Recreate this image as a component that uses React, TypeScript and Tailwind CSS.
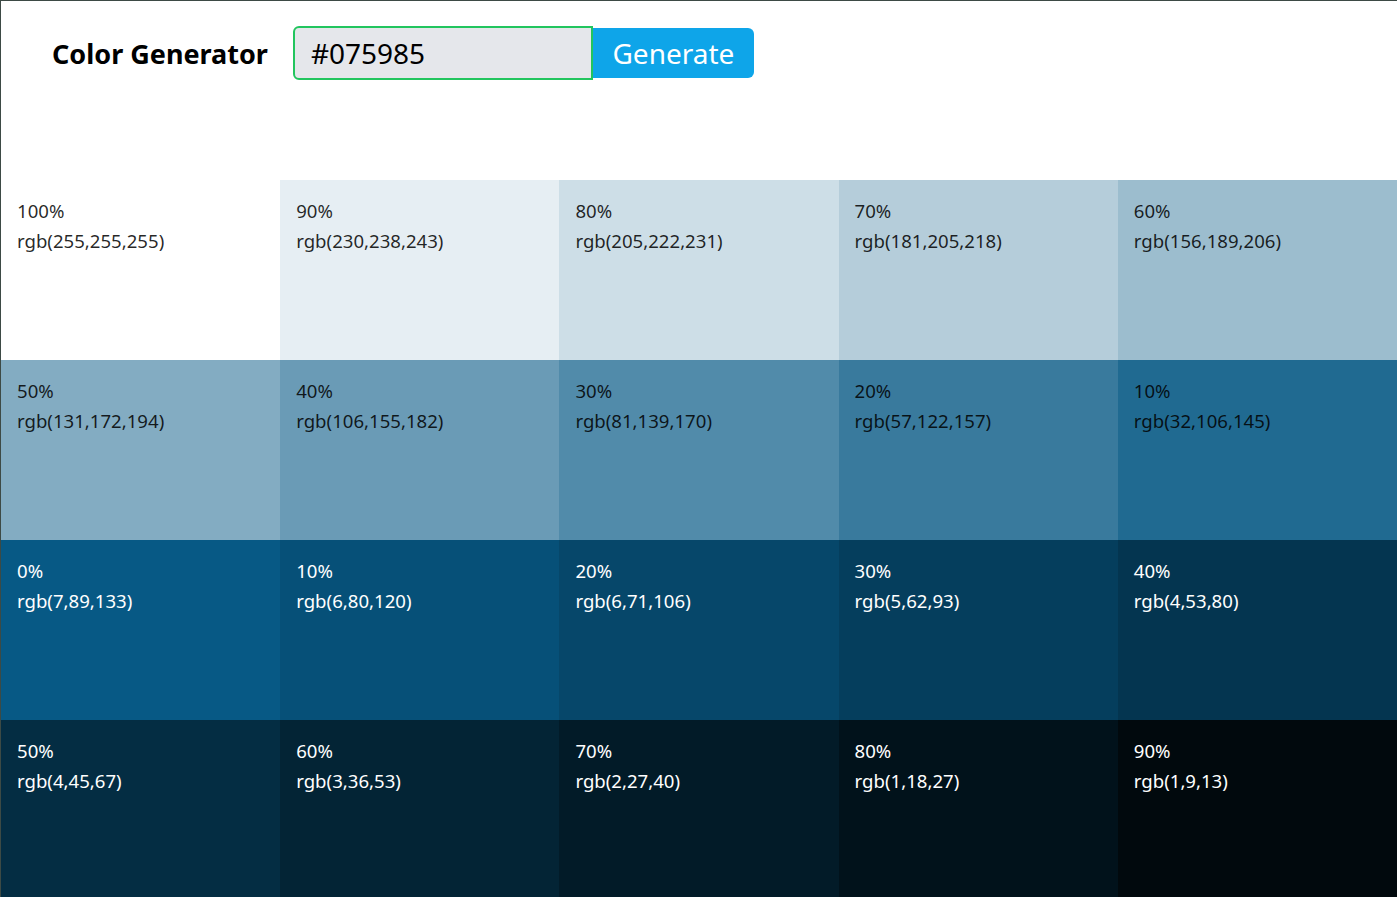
const tints = [
  { w: "100%", rgb: "255,255,255", bg: "bg-[rgb(255,255,255)]" },
  { w: "90%", rgb: "230,238,243", bg: "bg-[rgb(230,238,243)]" },
  { w: "80%", rgb: "205,222,231", bg: "bg-[rgb(205,222,231)]" },
  { w: "70%", rgb: "181,205,218", bg: "bg-[rgb(181,205,218)]" },
  { w: "60%", rgb: "156,189,206", bg: "bg-[rgb(156,189,206)]" },
  { w: "50%", rgb: "131,172,194", bg: "bg-[rgb(131,172,194)]" },
  { w: "40%", rgb: "106,155,182", bg: "bg-[rgb(106,155,182)]" },
  { w: "30%", rgb: "81,139,170", bg: "bg-[rgb(81,139,170)]" },
  { w: "20%", rgb: "57,122,157", bg: "bg-[rgb(57,122,157)]" },
  { w: "10%", rgb: "32,106,145", bg: "bg-[rgb(32,106,145)]" },
];

const shades = [
  { w: "0%", rgb: "7,89,133", bg: "bg-[rgb(7,89,133)]" },
  { w: "10%", rgb: "6,80,120", bg: "bg-[rgb(6,80,120)]" },
  { w: "20%", rgb: "6,71,106", bg: "bg-[rgb(6,71,106)]" },
  { w: "30%", rgb: "5,62,93", bg: "bg-[rgb(5,62,93)]" },
  { w: "40%", rgb: "4,53,80", bg: "bg-[rgb(4,53,80)]" },
  { w: "50%", rgb: "4,45,67", bg: "bg-[rgb(4,45,67)]" },
  { w: "60%", rgb: "3,36,53", bg: "bg-[rgb(3,36,53)]" },
  { w: "70%", rgb: "2,27,40", bg: "bg-[rgb(2,27,40)]" },
  { w: "80%", rgb: "1,18,27", bg: "bg-[rgb(1,18,27)]" },
  { w: "90%", rgb: "1,9,13", bg: "bg-[rgb(1,9,13)]" },
];

function Swatch({ w, rgb, bg, light }: { w: string; rgb: string; bg: string; light: boolean }) {
  return (
    <article className={`${bg} h-[180px] px-4 pt-4 text-[18.6px] leading-[30px] ${light ? "text-black/85" : "text-white"}`}>
      <p>{w}</p>
      <p>rgb({rgb})</p>
    </article>
  );
}

export default function App() {
  return (
    <main className="min-h-screen bg-white border-t border-l border-[#3d4a45] font-['Noto_Sans','Open_Sans',sans-serif]">
      {/* header */}
      <section className="h-[179px] flex items-start pl-[51px] pt-[25px]">
        <h3 className="text-[27px] font-bold leading-[56px] mr-[25px] text-black">Color Generator</h3>
        <form className="flex items-center" onSubmit={(e) => e.preventDefault()}>
          <input
            type="text"
            defaultValue="#075985"
            className="w-[300px] h-[54px] bg-[#e5e7eb] border-2 border-[#22c55e] rounded-l-md pl-4 text-[28px] text-black outline-none"
          />
          <button className="h-[50px] w-[161px] bg-[#0ea5e9] rounded-r-md text-white text-[28px] leading-none">
            Generate
          </button>
        </form>
      </section>

      {/* colors */}
      <section className="grid grid-cols-5">
        {tints.map((c) => (
          <Swatch key={"t" + c.w} {...c} light />
        ))}
        {shades.map((c) => (
          <Swatch key={"s" + c.w} {...c} light={false} />
        ))}
      </section>
    </main>
  );
}
